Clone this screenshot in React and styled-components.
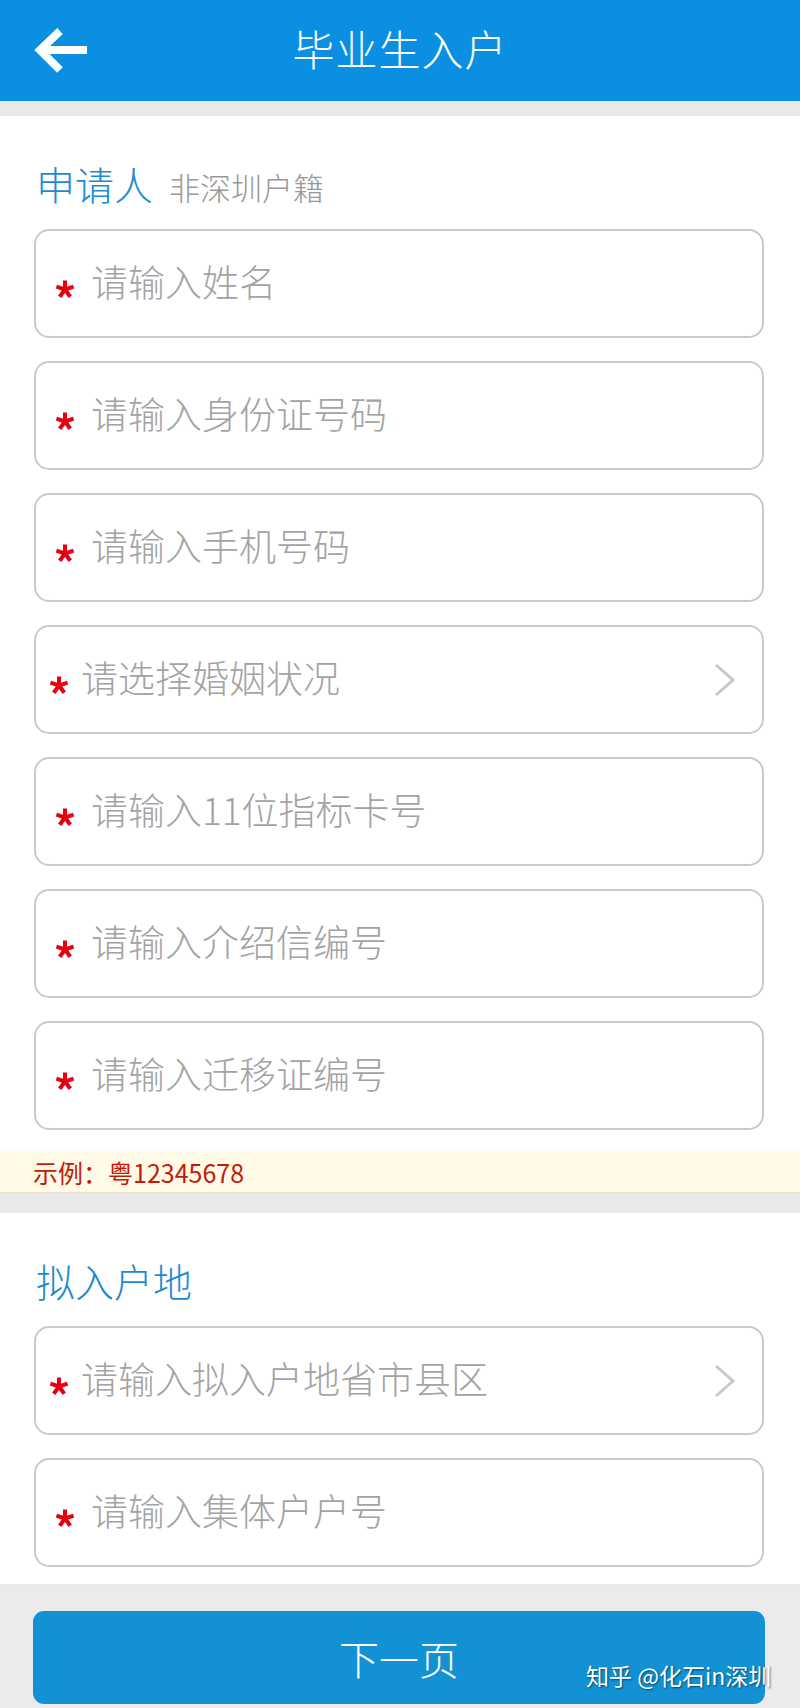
import React from "react";
import styled, { createGlobalStyle } from "styled-components";

const GlobalStyle = createGlobalStyle`
  body {
    margin: 0;
    background: #e9e9e9;
    font-family: "Noto Sans CJK SC", "Noto Sans", sans-serif;
  }
`;

const Page = styled.div`
  width: 800px;
  height: 1708px;
  display: flex;
  flex-direction: column;
  background: #e9e9e9;
  overflow: hidden;
`;

const Header = styled.div`
  height: 101px;
  flex-shrink: 0;
  display: grid;
  grid-template-columns: 1fr auto 1fr;
  align-items: center;
  background: #0a8fe2;
  color: #fff;
`;

const BackButton = styled.div`
  padding-left: 33px;
  display: flex;
  align-items: center;
  height: 100%;
`;

const HeaderTitle = styled.div`
  font-size: 42px;
  font-weight: 300;
  line-height: 1;
  letter-spacing: 1px;
  margin-top: -6px;
`;

const Section = styled.div`
  background: #fff;
  margin-top: ${(p) => p.$gap}px;
  padding: 37px 36px ${(p) => p.$bottom}px 34px;
  display: flex;
  flex-direction: column;
`;

const SectionTitle = styled.div`
  display: flex;
  align-items: baseline;
  height: 60px;
  line-height: 60px;
  margin-bottom: 16px;
  margin-left: 2px;
`;

const TitleMain = styled.span`
  font-size: 39px;
  font-weight: 300;
  color: #1a8bd0;
`;

const TitleSub = styled.span`
  font-size: 31px;
  font-weight: 300;
  color: #999;
  margin-left: 16px;
`;

const FieldList = styled.div`
  display: flex;
  flex-direction: column;
  gap: 23px;
`;

const Field = styled.div`
  box-sizing: border-box;
  height: 109px;
  border: 2px solid #cacaca;
  border-radius: 15px;
  display: flex;
  align-items: center;
  padding: 0 26px 0 ${(p) => (p.$select ? 13 : 19)}px;
`;

const Star = styled.svg`
  width: 20px;
  height: 20px;
  flex-shrink: 0;
  margin-top: 10px;
  margin-right: ${(p) => (p.$select ? 12 : 16)}px;
`;

const Placeholder = styled.span`
  flex: 1;
  font-size: 37px;
  font-weight: 300;
  line-height: 1;
  color: #a3a3a3;
  margin-top: -4px;
  white-space: nowrap;
`;

const Chevron = styled.svg`
  width: 22px;
  height: 34px;
  flex-shrink: 0;
`;

const Hint = styled.div`
  height: 41px;
  margin: 21px -36px 0 -34px;
  padding-left: 33px;
  background: #fffbe6;
  border-bottom: 1px solid #e8e4d0;
  display: flex;
  align-items: center;
  font-size: 25px;
  color: #c41a0c;
`;

const Footer = styled.div`
  flex: 1;
  margin-top: 1px;
  background: #ebebeb;
  padding: 26px 35px 0 33px;
  position: relative;
`;

const NextButton = styled.div`
  height: 93px;
  border-radius: 11px;
  background: #1292d4;
  color: #fff;
  font-size: 40px;
  font-weight: 300;
  display: flex;
  align-items: center;
  justify-content: center;
`;

const Watermark = styled.div`
  position: absolute;
  left: 586px;
  top: 73px;
  font-size: 23px;
  color: #fff;
  white-space: nowrap;
  text-shadow: 1px 1px 2px rgba(0, 0, 0, 0.55);
`;

const StarIcon = ({ select }) => (
  <Star $select={select} viewBox="0 0 20 20">
    {[-90, -18, 54, 126, 198].map((a) => {
      const r = (a * Math.PI) / 180;
      return (
        <line
          key={a}
          x1="10"
          y1="10.5"
          x2={10 + Math.cos(r) * 9}
          y2={10.5 + Math.sin(r) * 9}
          stroke="#e60012"
          strokeWidth="4"
        />
      );
    })}
  </Star>
);

const FormField = ({ label, select }) => (
  <Field $select={select}>
    <StarIcon select={select} />
    <Placeholder>{label}</Placeholder>
    {select && (
      <Chevron viewBox="0 0 22 34">
        <polyline
          points="2,2 19,17 2,32"
          fill="none"
          stroke="#c8c8c8"
          strokeWidth="3"
        />
      </Chevron>
    )}
  </Field>
);

const applicantFields = [
  { label: "请输入姓名" },
  { label: "请输入身份证号码" },
  { label: "请输入手机号码" },
  { label: "请选择婚姻状况", select: true },
  { label: "请输入11位指标卡号" },
  { label: "请输入介绍信编号" },
  { label: "请输入迁移证编号" },
];

const placeFields = [
  { label: "请输入拟入户地省市县区", select: true },
  { label: "请输入集体户户号" },
];

export default function App() {
  return (
    <Page>
      <GlobalStyle />
      <Header>
        <BackButton>
          <svg width="56" height="48" viewBox="0 0 56 48">
            <path
              d="M54 23 H10 M27 4 L7 23 L27 43"
              fill="none"
              stroke="#fff"
              strokeWidth="8"
            />
          </svg>
        </BackButton>
        <HeaderTitle>毕业生入户</HeaderTitle>
        <div />
      </Header>

      <Section $gap={15} $bottom={0}>
        <SectionTitle>
          <TitleMain>申请人</TitleMain>
          <TitleSub>非深圳户籍</TitleSub>
        </SectionTitle>
        <FieldList>
          {applicantFields.map((f) => (
            <FormField key={f.label} {...f} />
          ))}
        </FieldList>
        <Hint>示例：粤12345678</Hint>
      </Section>

      <Section $gap={20} $bottom={17}>
        <SectionTitle>
          <TitleMain>拟入户地</TitleMain>
        </SectionTitle>
        <FieldList>
          {placeFields.map((f) => (
            <FormField key={f.label} {...f} />
          ))}
        </FieldList>
      </Section>

      <Footer>
        <NextButton>下一页</NextButton>
        <Watermark>知乎 @化石in深圳</Watermark>
      </Footer>
    </Page>
  );
}
